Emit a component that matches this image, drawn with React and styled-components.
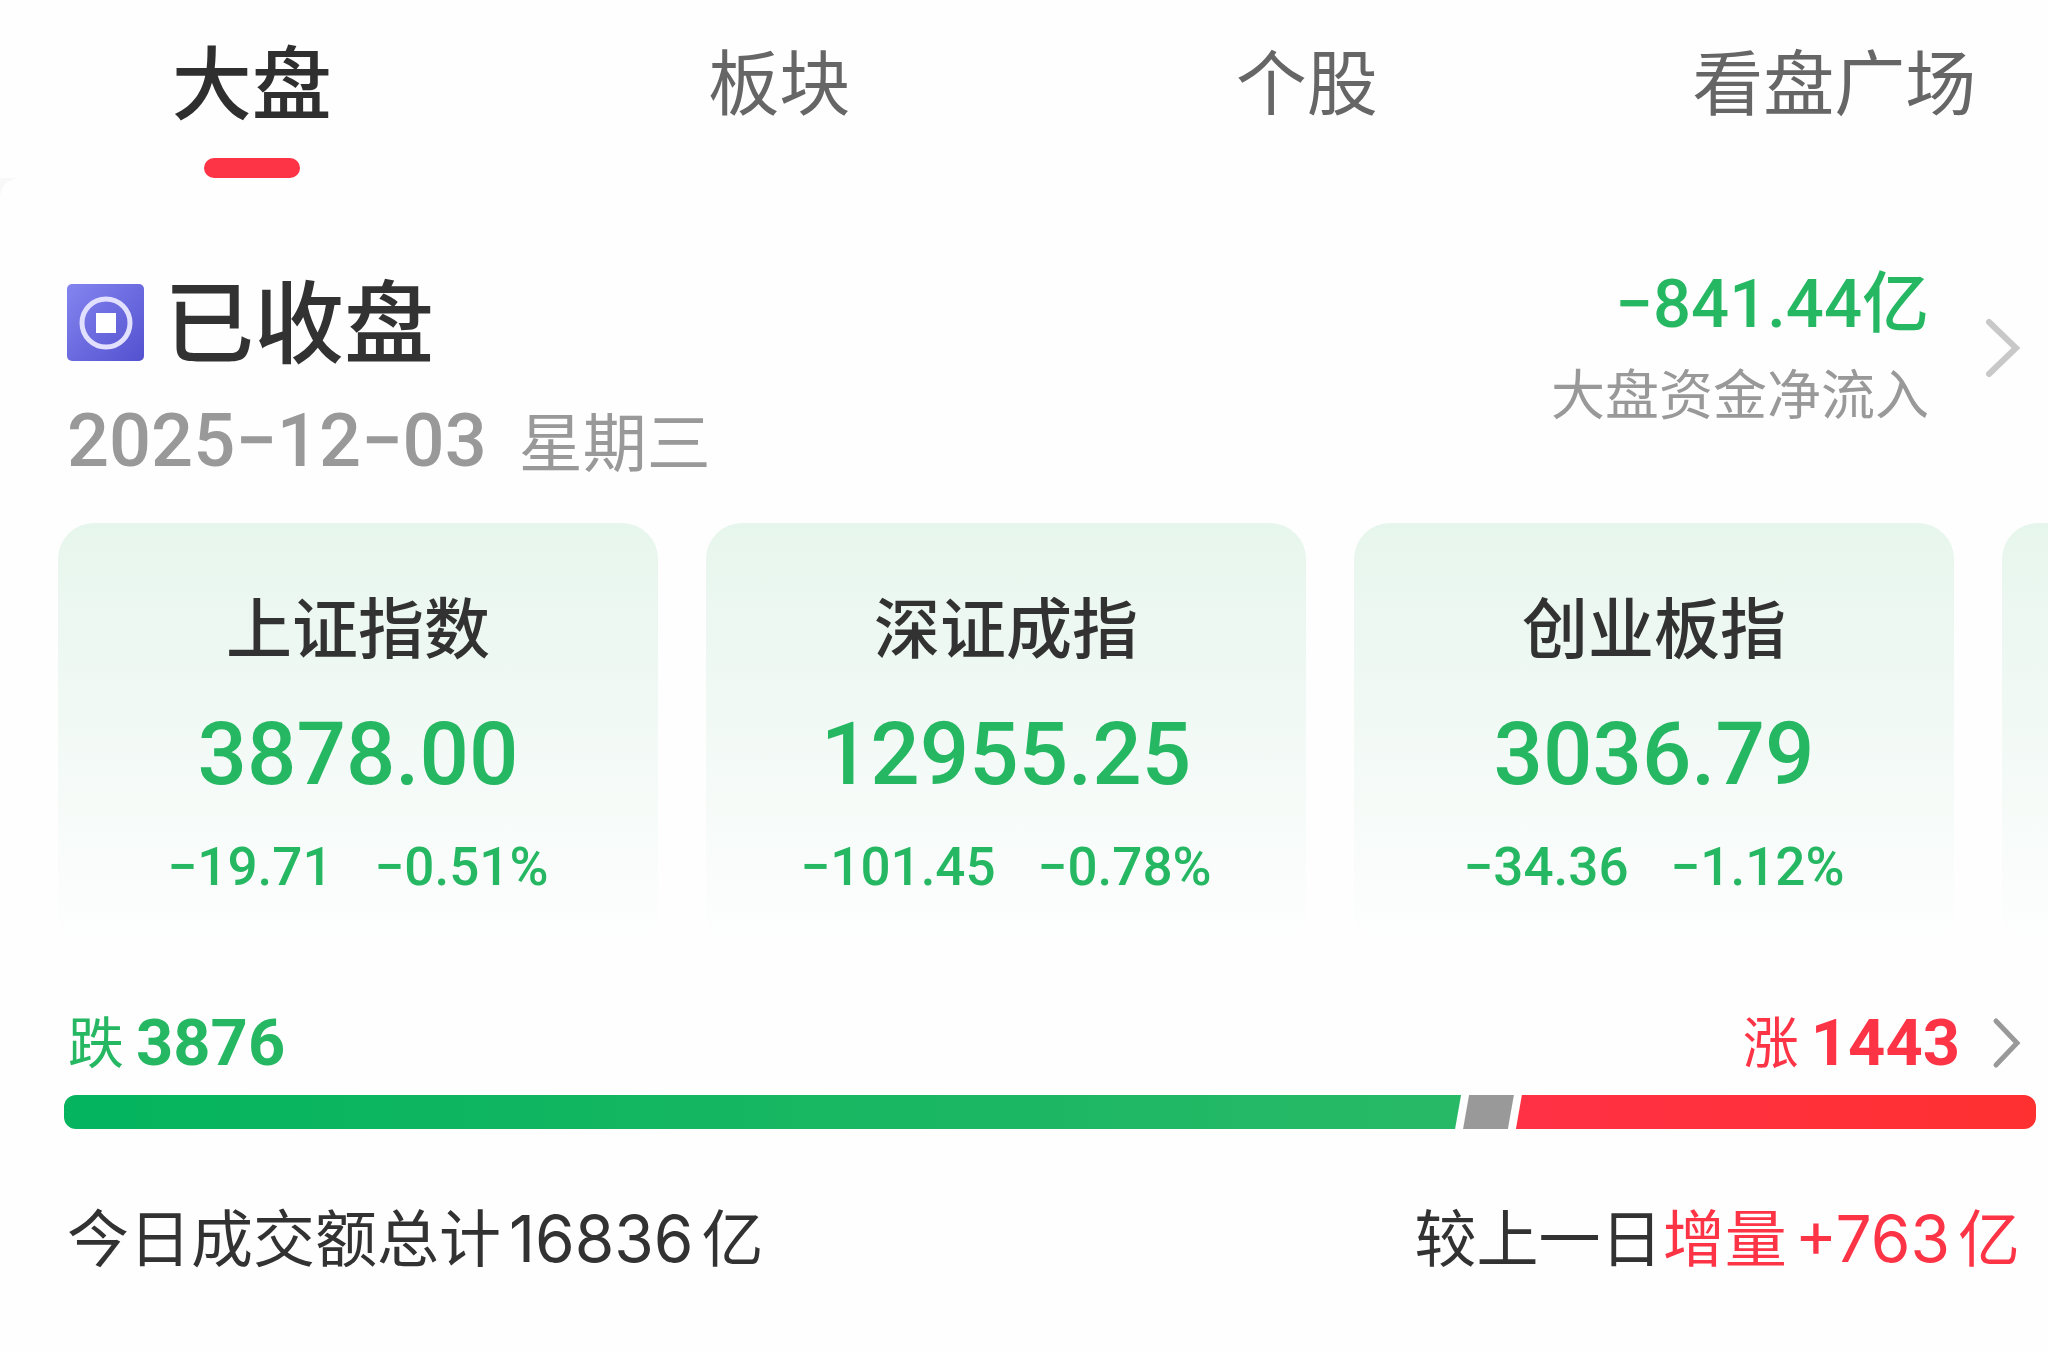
import React from "react";
import styled, { createGlobalStyle } from "styled-components";

const cjk = `"Noto Sans CJK SC", sans-serif`;
const digits = `Roboto, "Noto Sans CJK SC", sans-serif`;
const green = "#26b763";
const red = "#fd3346";

const GlobalStyle = createGlobalStyle`
  *, *::before, *::after { box-sizing: border-box; }
  body {
    margin: 0;
    background: #fefefe;
    color: #323232;
    font-family: ${cjk};
    overflow-x: hidden;
  }
  button, a {
    font: inherit;
    color: inherit;
    text-decoration: none;
  }
  h1, h2, p { margin: 0; font-weight: inherit; }
`;

const Page = styled.div`
  overflow: hidden;
  min-height: 100vh;
`;

const Tabs = styled.nav`
  display: grid;
  grid-template-columns: repeat(4, 1fr);
  margin: 0 -50px 0 -12px;
  height: 178px;
`;

const Tab = styled.button`
  display: flex;
  flex-direction: column;
  align-items: center;
  justify-content: space-between;
  padding: 18px 0 0;
  border: 0;
  background: none;
  cursor: pointer;
  color: ${(p) => (p.$active ? "#2f2f2f" : "#666")};
  font-size: ${(p) => (p.$active ? 80 : 71)}px;
  font-weight: ${(p) => (p.$active ? 500 : 400)};
  line-height: 120px;

  &::after {
    content: "";
    width: 96px;
    height: 20px;
    border-radius: 10px;
    background: ${(p) => (p.$active ? red : "transparent")};
  }
`;

const PanelBack = styled.div`
  background: #f8f8f8;
`;

const Panel = styled.main`
  border-top-left-radius: 20px;
  background: #fefefe;
  padding: 82px 0 60px;
`;

const Summary = styled.header`
  display: flex;
  justify-content: space-between;
  padding: 0 27px 0 67px;
`;

const Heading = styled.div`
  display: flex;
  align-items: center;
  gap: 20px;
`;

const Title = styled.h1`
  padding-bottom: 10px;
  font-size: 90px;
  font-weight: 500;
  line-height: 114px;
`;

const DateLine = styled.p`
  display: flex;
  align-items: baseline;
  gap: 32px;
  color: #999;
  line-height: 108px;
`;

const Day = styled.time`
  font: 500 74px/108px ${digits};
`;

const Weekday = styled.span`
  font-size: 64px;
`;

const FlowLink = styled.a`
  display: flex;
  align-items: center;
  align-self: flex-start;
  gap: 56px;
`;

const Flow = styled.div`
  text-align: right;
`;

const FlowValue = styled.p`
  font: 500 67px/88px ${digits};
  color: ${green};
`;

const FlowLabel = styled.p`
  font-size: 54px;
  line-height: 88px;
  color: #999;
`;

const Cards = styled.section`
  display: flex;
  gap: 48px;
  margin-top: 28px;
  padding-left: 58px;
`;

const Card = styled.article`
  flex: 0 0 calc(30% + 3px);
  height: 428px;
  padding-top: 53px;
  border-radius: 36px;
  background: linear-gradient(#e7f6ed, #f1f9f5 45%, #fefefe);
  text-align: center;
`;

const CardTitle = styled.h2`
  font-size: 66px;
  font-weight: 500;
  line-height: 96px;
`;

const CardValue = styled.p`
  font: 500 87px/164px ${digits};
  color: ${green};
`;

const CardChange = styled.p`
  display: flex;
  justify-content: center;
  gap: 42px;
  font: 500 53px/62px ${digits};
  color: ${green};
`;

const Breadth = styled.section`
  padding: 40px 12px 0 64px;
`;

const BreadthRow = styled.div`
  display: flex;
  justify-content: space-between;
  padding: 0 14px 0 4px;
`;

const Count = styled.span`
  display: flex;
  align-items: flex-start;
  gap: 12px;
  font-size: 56px;
  line-height: 96px;
  color: ${(p) => p.$color};
`;

const CountNumber = styled.strong`
  font: 700 65px/104px ${digits};
`;

const RiseLink = styled.a`
  display: flex;
  align-items: center;
  gap: 32px;
`;

const Bar = styled.div`
  display: flex;
  gap: 2px;
  height: 34px;
  border-radius: 12px;
  overflow: hidden;
`;

const slant = {
  down: "polygon(0 0, 100% 0, calc(100% - 6px) 100%, 0 100%)",
  flat: "polygon(6px 0, 100% 0, calc(100% - 6px) 100%, 0 100%)",
  up: "polygon(6px 0, 100% 0, 100% 100%, 0 100%)",
};

const barFill = {
  down: "linear-gradient(90deg, #04b45e, #28b966)",
  flat: "#999",
  up: "linear-gradient(90deg, #ff3145, #ff3030)",
};

const Segment = styled.div`
  flex: ${(p) => p.$share} 0 0;
  background: ${(p) => barFill[p.$kind]};
  clip-path: ${(p) => slant[p.$kind]};
`;

const Turnover = styled.footer`
  display: flex;
  justify-content: space-between;
  padding: 56px 28px 0 67px;
  font-size: 62px;
  line-height: 100px;
`;

const Amount = styled.span`
  margin: 0 8px;
  font-family: Inter, sans-serif;
  font-size: 64px;
  line-height: 1;
`;

const Increase = styled.span`
  color: ${red};
`;

function CoinIcon() {
  return (
    <svg width="77" height="77" viewBox="0 0 77 77" aria-hidden="true">
      <defs>
        <linearGradient id="coin" x1="0" y1="0" x2="1" y2="1">
          <stop offset="0" stopColor="#8485f0" />
          <stop offset="1" stopColor="#5351cf" />
        </linearGradient>
      </defs>
      <rect width="77" height="77" rx="5" fill="url(#coin)" />
      <circle cx="39" cy="39" r="24" fill="none" stroke="#e2e0ff" strokeWidth="5" />
      <rect x="29" y="29" width="20" height="20" fill="#fff" />
    </svg>
  );
}

function Chevron({ width, height, color, stroke }) {
  return (
    <svg width={width} height={height} viewBox={`0 0 ${width} ${height}`} aria-hidden="true">
      <path
        d={`M4 4 L${width - 5} ${height / 2} L4 ${height - 4}`}
        fill="none"
        stroke={color}
        strokeWidth={stroke}
        strokeLinecap="round"
      />
    </svg>
  );
}

const tabs = ["大盘", "板块", "个股", "看盘广场"];

const indexes = [
  { name: "上证指数", value: "3878.00", change: "−19.71", percent: "−0.51%" },
  { name: "深证成指", value: "12955.25", change: "−101.45", percent: "−0.78%" },
  { name: "创业板指", value: "3036.79", change: "−34.36", percent: "−1.12%" },
];

const breadth = [
  { kind: "down", share: 3876 },
  { kind: "flat", share: 141 },
  { kind: "up", share: 1443 },
];

export default function App() {
  return (
    <Page>
      <GlobalStyle />
      <Tabs>
        {tabs.map((name, i) => (
          <Tab key={name} type="button" $active={i === 0}>
            {name}
          </Tab>
        ))}
      </Tabs>
      <PanelBack>
        <Panel>
          <Summary>
            <div>
              <Heading>
                <CoinIcon />
                <Title>已收盘</Title>
              </Heading>
              <DateLine>
                <Day dateTime="2025-12-03">2025−12−03</Day>
                <Weekday>星期三</Weekday>
              </DateLine>
            </div>
            <FlowLink href="#flow">
              <Flow>
                <FlowValue>−841.44亿</FlowValue>
                <FlowLabel>大盘资金净流入</FlowLabel>
              </Flow>
              <Chevron width={36} height={60} color="#c8c8c8" stroke={6} />
            </FlowLink>
          </Summary>
          <Cards>
            {indexes.map((item) => (
              <Card key={item.name}>
                <CardTitle>{item.name}</CardTitle>
                <CardValue>{item.value}</CardValue>
                <CardChange>
                  <span>{item.change}</span>
                  <span>{item.percent}</span>
                </CardChange>
              </Card>
            ))}
            <Card />
          </Cards>
          <Breadth>
            <BreadthRow>
              <Count $color={green}>
                跌<CountNumber>3876</CountNumber>
              </Count>
              <RiseLink href="#rise">
                <Count $color={red}>
                  涨<CountNumber>1443</CountNumber>
                </Count>
                <Chevron width={30} height={52} color="#999" stroke={5} />
              </RiseLink>
            </BreadthRow>
            <Bar>
              {breadth.map((part) => (
                <Segment key={part.kind} $kind={part.kind} $share={part.share} />
              ))}
            </Bar>
          </Breadth>
          <Turnover>
            <p>
              今日成交额总计<Amount>16836</Amount>亿
            </p>
            <p>
              较上一日
              <Increase>
                增量<Amount>+763</Amount>亿
              </Increase>
            </p>
          </Turnover>
        </Panel>
      </PanelBack>
    </Page>
  );
}
